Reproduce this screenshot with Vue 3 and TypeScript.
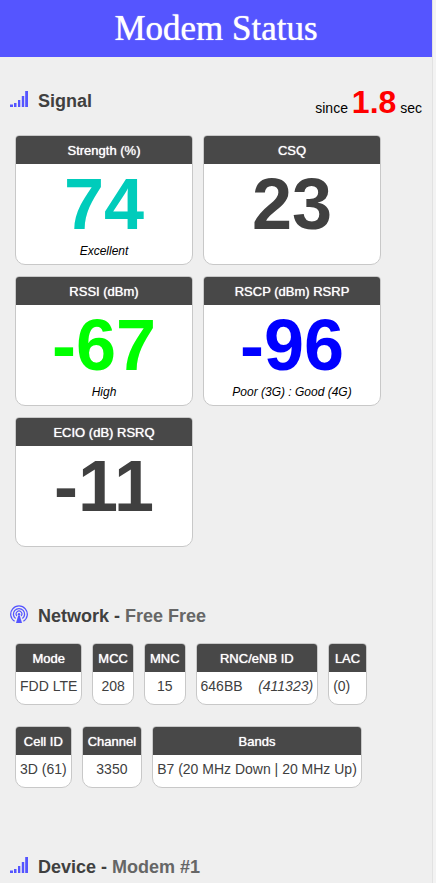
<script setup lang="ts">
interface Reading {
  label: string
  value: string
  note?: string
  tone: string
}

interface Field {
  label: string
  value: string
  extra?: string
}

const readings: Reading[] = [
  { label: 'Strength (%)', value: '74', note: 'Excellent', tone: 'teal' },
  { label: 'CSQ', value: '23', tone: 'plain' },
  { label: 'RSSI (dBm)', value: '-67', note: 'High', tone: 'green' },
  { label: 'RSCP (dBm) RSRP', value: '-96', note: 'Poor (3G) : Good (4G)', tone: 'blue' },
  { label: 'ECIO (dB) RSRQ', value: '-11', tone: 'plain' },
]

const fieldRows: Field[][] = [
  [
    { label: 'Mode', value: 'FDD LTE' },
    { label: 'MCC', value: '208' },
    { label: 'MNC', value: '15' },
    { label: 'RNC/eNB ID', value: '646BB\u00a0\u00a0\u00a0\u00a0', extra: '(411323)' },
    { label: 'LAC', value: '(0)\u00a0\u00a0\u00a0' },
  ],
  [
    { label: 'Cell ID', value: '3D (61)' },
    { label: 'Channel', value: '3350' },
    { label: 'Bands', value: 'B7 (20 MHz Down | 20 MHz Up)' },
  ],
]
</script>

<template>
  <div class="page">
    <header class="banner">
      <h1>Modem Status</h1>
    </header>

    <main>
      <section class="signal">
        <div class="heading">
          <svg class="icon" viewBox="0 0 18 18" aria-hidden="true">
            <path d="M0 14.5h3V17H0zM4 13h2.5v4H4zM8 10h2.3v7H8zM11.8 6h2.4v11h-2.4zM15.2 1H18v16h-2.8z" />
          </svg>
          <h2>Signal</h2>
          <p class="since">since <strong>1.8</strong> sec</p>
        </div>
        <div class="readings">
          <article v-for="r in readings" :key="r.label" class="card reading">
            <h3>{{ r.label }}</h3>
            <p class="figure" :class="r.tone">{{ r.value }}</p>
            <p v-if="r.note" class="note">{{ r.note }}</p>
          </article>
        </div>
      </section>

      <section class="network">
        <div class="heading">
          <svg class="icon" viewBox="0 0 18 18" aria-hidden="true">
            <g fill="none" stroke="#5555ff">
              <path d="M4.6 16.3A8.3 8.3 0 1 1 13.4 16.3" stroke-width="1.3" />
              <path d="M5.6 13.6A5.6 5.6 0 1 1 12.4 13.6" stroke-width="1.3" />
              <path d="M6.9 11A2.9 2.9 0 1 1 11.1 11" stroke-width="1.1" />
            </g>
            <circle cx="9" cy="9.3" r="1.2" />
            <path d="M8.2 10.5h1.6L12 18H6z" />
          </svg>
          <h2>Network - <span>Free Free</span></h2>
        </div>
        <div class="rows">
          <div v-for="(row, i) in fieldRows" :key="i" class="fields">
            <article v-for="f in row" :key="f.label" class="card field">
              <h3>{{ f.label }}</h3>
              <p>{{ f.value }}<em v-if="f.extra">{{ f.extra }}</em></p>
            </article>
          </div>
        </div>
      </section>

      <section>
        <div class="heading">
          <svg class="icon" viewBox="0 0 18 18" aria-hidden="true">
            <path d="M0 14.5h3V17H0zM4 13h2.5v4H4zM8 10h2.3v7H8zM11.8 6h2.4v11h-2.4zM15.2 1H18v16h-2.8z" />
          </svg>
          <h2>Device - <span>Modem #1</span></h2>
        </div>
      </section>
    </main>
  </div>
</template>

<style>
body {
  background: #f3f3f3;
}
</style>

<style scoped>
.page {
  min-height: 100vh;
  margin-right: 3px;
  border-right: 1px solid #e2e2e2;
  background: #efefef;
  color: #404040;
  font-family: "Liberation Sans", Arial, sans-serif;
}

h1,
h2,
h3,
p {
  margin: 0;
}

.banner {
  background: #5555ff;
  color: #fff;
  text-align: center;
}

h1 {
  font-family: "Liberation Serif", Georgia, serif;
  font-size: 35px;
  font-weight: 400;
  line-height: 57px;
  text-shadow: 0 0 1px #fff;
}

.heading {
  display: flex;
  align-items: center;
  height: 24px;
  padding: 0 10px;
}

.icon {
  width: 18px;
  height: 18px;
  margin: 0 10px 4px 0;
  fill: #5555ff;
}

h2 {
  font-size: 18px;
  line-height: 24px;
}

h2 span {
  color: #666;
}

.since {
  margin-left: auto;
  padding-top: 8px;
  color: #000;
  font-size: 14px;
  line-height: 24px;
}

.since strong {
  color: #f00;
  font-size: 32px;
}

.signal {
  padding-top: 32px;
}

.readings {
  display: flex;
  flex-wrap: wrap;
  gap: 11px 10px;
  padding: 22px 15px 0;
}

.card {
  overflow: hidden;
  border: 1px solid #c8c8c8;
  border-radius: 4px 4px 10px 10px;
  background: #fff;
  text-align: center;
}

.card h3 {
  padding-top: 2px;
  background: #484848;
  color: #fff;
  font-size: 13px;
  font-weight: 400;
  line-height: 26px;
  text-shadow: 0 0 1px #fff;
}

.reading {
  box-sizing: border-box;
  width: 178px;
  height: 130px;
}

.figure {
  font-size: 72px;
  font-weight: 700;
  line-height: 80px;
}

.teal {
  color: #00ccbb;
}

.green {
  color: #00ff00;
}

.blue {
  color: #0000ff;
}

.note {
  color: #000;
  font-size: 12px;
  font-style: italic;
  line-height: 14px;
}

.network {
  padding: 57px 0 67px;
}

.rows {
  display: grid;
  gap: 21px;
  padding: 15px 15px 0;
}

.fields {
  display: flex;
  gap: 10px;
}

.card.field h3 {
  padding-right: 5px;
  padding-left: 5px;
}

.field p {
  padding: 2px 4px 6px;
  font-size: 14px;
  line-height: 24px;
  white-space: nowrap;
}
</style>
